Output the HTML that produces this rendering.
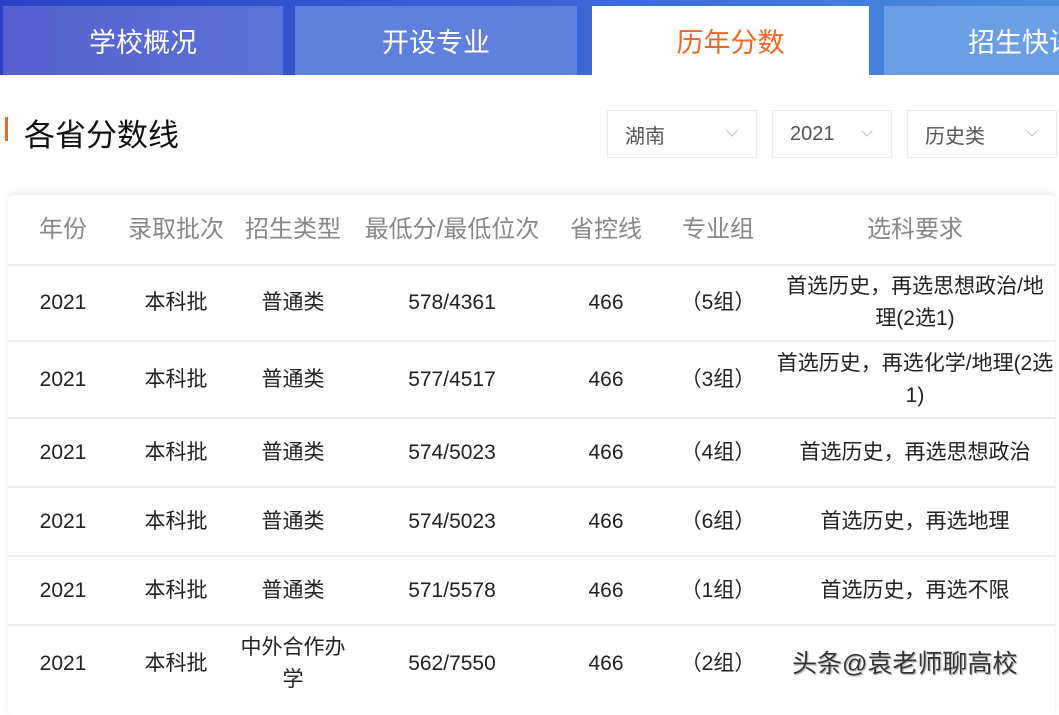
<!DOCTYPE html>
<html><head><meta charset="utf-8"><style>
*{margin:0;padding:0;box-sizing:border-box}
body{width:1059px;height:698px;overflow:hidden;background:#fff;font-family:"Liberation Sans","Noto Sans CJK SC",sans-serif;position:relative}
.bar{position:absolute;left:0;top:0;width:1059px;height:75px;background:linear-gradient(90deg,#2a3fc6,#3b63d4 50%,#4a8ee0)}
.tab{position:absolute;top:6px;height:69px;color:#fff;font-size:27px;display:flex;align-items:center;justify-content:center}
.sel{position:absolute;top:110px;height:48px;border:1px solid #ebebeb;font-size:20px;color:#555;display:flex;align-items:center;padding-left:17px}
.sel i{position:absolute;right:20px;top:16px;width:8px;height:8px;border-right:1px solid #bbb;border-bottom:1px solid #bbb;transform:rotate(45deg)}
.card{position:absolute;left:8px;top:195px;width:1047px;height:520px;background:#fff;border-radius:6px;box-shadow:0 -2px 8px rgba(0,0,0,.08)}
.row{position:absolute;left:0;width:1047px;border-bottom:2px solid #eee}
.c{position:absolute;top:0;height:100%;display:flex;align-items:center;justify-content:center;text-align:center;font-size:21px;color:#222;line-height:32px}
.h .c{color:#888;font-size:24px}
</style></head><body>
<div class="bar"></div>
<div class="tab" style="left:3px;width:280px;background:linear-gradient(90deg,#5660cf,#5b73d8)">学校概况</div>
<div class="tab" style="left:295px;width:282px;background:#5f80dc">开设专业</div>
<div class="tab" style="left:592px;width:277px;background:#fff;color:#f26522">历年分数</div>
<div class="tab" style="left:884px;width:200px;background:#6a9fe4;justify-content:flex-start;padding-left:84px">招生快讯</div>
<div style="position:absolute;left:5px;top:117px;width:3px;height:24px;background:#f26522"></div>
<div style="position:absolute;left:24px;top:110px;font-size:31px;color:#111">各省分数线</div>
<div class="sel" style="left:607px;width:150px">湖南<i></i></div>
<div class="sel" style="left:772px;width:120px">2021<i></i></div>
<div class="sel" style="left:907px;width:150px">历史类<i></i></div>
<div class="card">
<div class="row h" style="top:0;height:71px">
<div class="c" style="left:0;width:110px">年份</div><div class="c" style="left:113px;width:110px">录取批次</div><div class="c" style="left:225px;width:120px">招生类型</div><div class="c" style="left:344px;width:200px">最低分/最低位次</div><div class="c" style="left:548px;width:100px">省控线</div><div class="c" style="left:660px;width:100px">专业组</div><div class="c" style="left:767px;width:280px">选科要求</div></div>
<div class="row" style="top:71px;height:76px"><div class="c" style="left:0;width:110px">2021</div><div class="c" style="left:113px;width:110px">本科批</div><div class="c" style="left:225px;width:120px">普通类</div><div class="c" style="left:344px;width:200px">578/4361</div><div class="c" style="left:548px;width:100px">466</div><div class="c" style="left:660px;width:100px">（5组）</div><div class="c" style="left:767px;width:280px;padding:0 6px">首选历史，再选思想政治/地理(2选1)</div></div>
<div class="row" style="top:147px;height:77px"><div class="c" style="left:0;width:110px">2021</div><div class="c" style="left:113px;width:110px">本科批</div><div class="c" style="left:225px;width:120px">普通类</div><div class="c" style="left:344px;width:200px">577/4517</div><div class="c" style="left:548px;width:100px">466</div><div class="c" style="left:660px;width:100px">（3组）</div><div class="c" style="left:767px;width:280px">首选历史，再选化学/地理(2选1)</div></div>
<div class="row" style="top:224px;height:69px"><div class="c" style="left:0;width:110px">2021</div><div class="c" style="left:113px;width:110px">本科批</div><div class="c" style="left:225px;width:120px">普通类</div><div class="c" style="left:344px;width:200px">574/5023</div><div class="c" style="left:548px;width:100px">466</div><div class="c" style="left:660px;width:100px">（4组）</div><div class="c" style="left:767px;width:280px">首选历史，再选思想政治</div></div>
<div class="row" style="top:293px;height:69px"><div class="c" style="left:0;width:110px">2021</div><div class="c" style="left:113px;width:110px">本科批</div><div class="c" style="left:225px;width:120px">普通类</div><div class="c" style="left:344px;width:200px">574/5023</div><div class="c" style="left:548px;width:100px">466</div><div class="c" style="left:660px;width:100px">（6组）</div><div class="c" style="left:767px;width:280px">首选历史，再选地理</div></div>
<div class="row" style="top:362px;height:69px"><div class="c" style="left:0;width:110px">2021</div><div class="c" style="left:113px;width:110px">本科批</div><div class="c" style="left:225px;width:120px">普通类</div><div class="c" style="left:344px;width:200px">571/5578</div><div class="c" style="left:548px;width:100px">466</div><div class="c" style="left:660px;width:100px">（1组）</div><div class="c" style="left:767px;width:280px">首选历史，再选不限</div></div>
<div class="row" style="top:431px;height:76px;border:none"><div class="c" style="left:0;width:110px">2021</div><div class="c" style="left:113px;width:110px">本科批</div><div class="c" style="left:230px;width:110px">中外合作办学</div><div class="c" style="left:344px;width:200px">562/7550</div><div class="c" style="left:548px;width:100px">466</div><div class="c" style="left:660px;width:100px">（2组）</div><div class="c" style="left:784px;width:260px;justify-content:flex-start;font-size:25px;color:#333;text-shadow:0 0 2px #fff,1px 1px 1px #888">头条@袁老师聊高校</div></div>
</div>
</body></html>
